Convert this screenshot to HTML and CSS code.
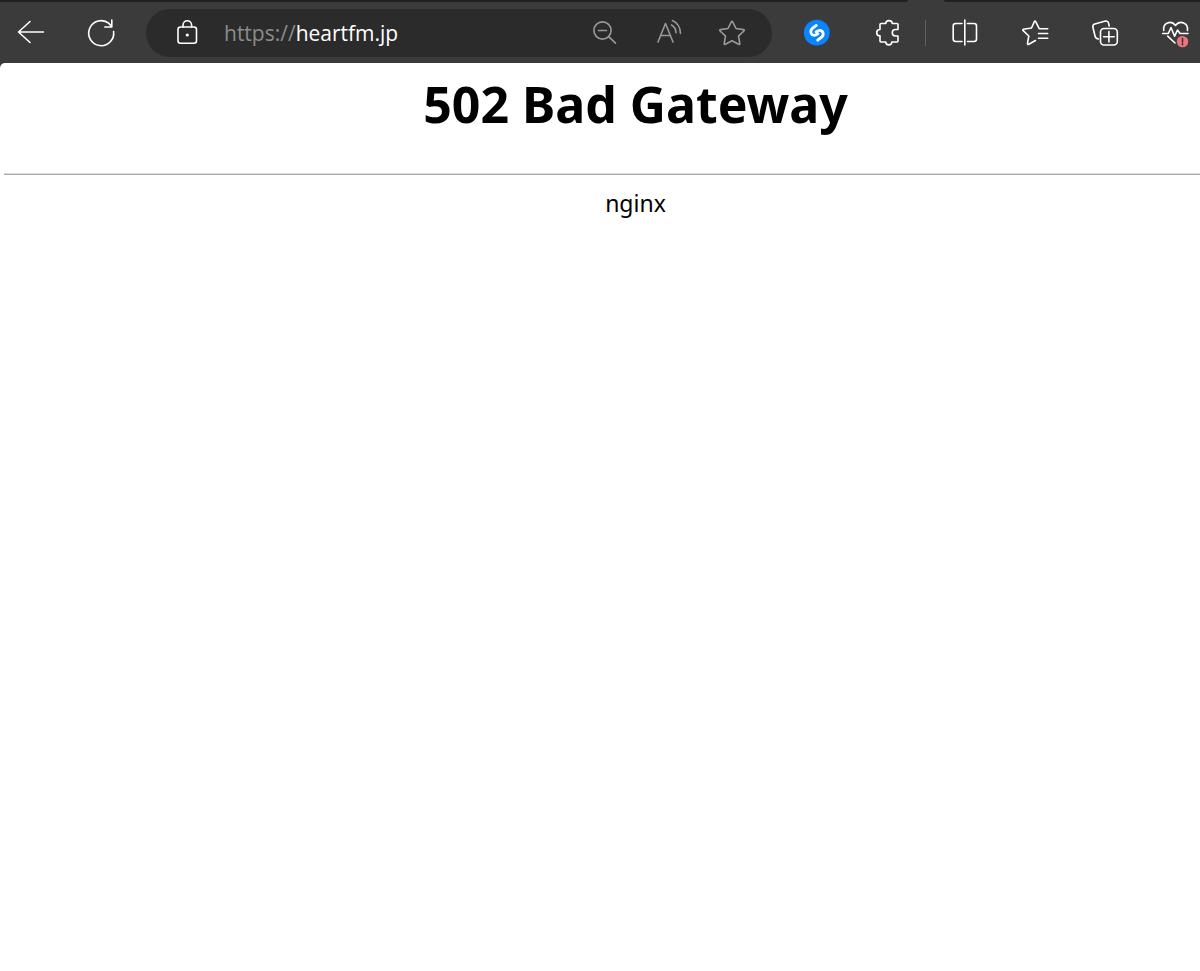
FILE: index.html
```html
<!DOCTYPE html>
<html lang="en">
<head>
<meta charset="utf-8">
<title>502 Bad Gateway</title>
<link rel="stylesheet" href="styles.css">
</head>
<body>
<header class="browser">
  <div class="tabs"><span class="tab-left"></span><span class="tab-right"></span></div>
  <nav class="toolbar" aria-label="Browser toolbar">
    <div class="group">
      <button class="icon" aria-label="Back"><svg viewBox="0 0 32 32"><path d="M28.500 15H3.500M15 4.500L3.500 15l11.500 10.500"/></svg></button>
      <button class="icon" aria-label="Refresh"><svg viewBox="0 0 32 32"><path d="M28.600 14.500A12.500 12.500 0 1 1 24 6.400L26.500 9.500M26.800 3v7h-7"/></svg></button>
    </div>
    <div class="address">
      <button class="icon" aria-label="Site information"><svg viewBox="0 0 32 32"><rect x="7" y="10" width="18.500" height="16.300" rx="2.500"/><path d="M12 10V8a4.300 4.300 0 0 1 8.600 0v2"/><circle class="dot" cx="16.300" cy="18" r="1.600"/></svg></button>
      <div class="url"><span class="scheme">https://</span>heartfm.jp</div>
      <div class="actions">
        <button class="icon" aria-label="Zoom out"><svg viewBox="0 0 32 32"><circle cx="14.500" cy="13.500" r="8.600"/><path d="M10.500 13.500h8M20.700 19.700l6.800 6.500"/></svg></button>
        <button class="icon" aria-label="Read aloud"><svg viewBox="0 0 32 32"><path d="M6 25L13.500 6.500L21 25M8.500 18.500h10M20.500 3.500C25 5.500 28.500 10.500 28.500 16.500M19.500 8C22 9.500 24 12.500 24 15.800"/></svg></button>
        <button class="icon" aria-label="Add to favorites"><svg viewBox="0 0 32 32"><path d="M15.300 4.900Q16 3.500 16.700 4.900L20 11.500L27.500 12.600Q29 12.900 27.900 14L22.500 19.200L23.800 26.500Q24 28 22.600 27.300L16 23.800L9.400 27.300Q8 28 8.200 26.500L9.500 19.200L4.100 14Q3 12.900 4.500 12.600L12 11.500Z"/></svg></button>
      </div>
    </div>
    <div class="group extensions">
      <button class="icon" aria-label="Shazam"><svg viewBox="0 0 32 32"><circle class="blue" cx="15.800" cy="15.700" r="12.900"/><path class="hook" d="M15.300 8.400L11.400 11.400C8.600 13.800 9.800 18.300 13.200 18.300C14.600 18.300 15.800 17.600 17 16.700"/><path class="hook" d="M16.700 23.200L20.600 20.200C23.400 17.800 22.200 13.300 18.800 13.300C17.400 13.300 16.200 14 15 14.900"/></svg></button>
      <button class="icon" aria-label="Extensions"><svg viewBox="0 0 32 32"><path d="M9 7.500Q9 6.500 10 6.500H14.800C14.800 2.600 21.200 2.600 21.200 6.500H26Q27 6.500 27 7.500V12.500H24.500C20.200 12.500 20.200 19 24.500 19H27V24Q27 25 26 25H20.800C20.800 28.800 14.800 28.800 14.800 25H10Q9 25 9 24V18.900C4.600 18.900 4.600 12.500 9 12.500Z"/></svg></button>
    </div>
    <span class="separator"></span>
    <div class="group">
      <button class="icon" aria-label="Split screen"><svg viewBox="0 0 32 32"><path d="M13 6.500H6.700Q4.200 6.500 4.200 9V22Q4.200 24.500 6.700 24.500H13M18.500 6.500H25Q27.500 6.500 27.500 9V22Q27.500 24.500 25 24.500H18.500M15.800 3V28"/></svg></button>
      <button class="icon" aria-label="Favorites"><svg viewBox="0 0 32 32"><path d="M28.700 11.700H20.200L16.700 4.700Q16 3.500 15.300 4.700L12.500 11L4.500 12.300Q3.200 12.800 4.200 13.700L9.800 19L8.500 26.300Q8.400 27.900 9.800 27.200L16.500 23.500M19.500 16.500H28.700M19.500 21.300H28.700"/></svg></button>
      <button class="icon" aria-label="Collections"><svg viewBox="0 0 32 32"><rect x="11.500" y="11.500" width="16.800" height="16.500" rx="3.500"/><path d="M19.900 14.500V25M14.600 19.800H25.200M9.500 22C7.500 21.800 6.500 21 6.100 19.300L3.900 10.300Q3.400 7.800 5.800 7.100L16.500 4.100Q18.900 3.600 19.500 6L20.200 9"/></svg></button>
      <button class="icon" aria-label="Browser essentials"><svg viewBox="0 0 32 32"><path d="M4.800 13.500C3.500 6 12 2.500 16.500 8.500C21 2.500 29.600 6 28.400 13.500M3.700 16.500H9.300L12 10.500L15.600 19.200L18.500 13L21 16.500H29M8.700 19.200L16 26"/><circle class="alert" cx="23.500" cy="24.600" r="5.700"/><path class="mark" d="M23.500 21.500v3.600M23.500 26.800v1"/></svg></button>
    </div>
  </nav>
</header>
<main class="viewport">
  <div class="page">
    <h1>502 Bad Gateway</h1>
    <hr>
    <p>nginx</p>
  </div>
</main>
</body>
</html>
```

FILE: styles.css
```css
* { box-sizing: border-box; }
body {
  margin: 0;
  min-height: 100vh;
  display: flex;
  flex-direction: column;
  background: #fff;
  overflow-x: hidden;
}
.browser { background: #3b3b3b; }
.tabs {
  display: flex;
  justify-content: space-between;
  gap: 36px;
  height: 3px;
}
.tabs span { background: #202020; height: 2px; }
.tab-left { flex: 1; border-bottom-right-radius: 6px; }
.tab-right { width: 256px; border-bottom-left-radius: 6px; }
.toolbar {
  display: flex;
  align-items: center;
  height: 60px;
  padding: 0 9px 0 15px;
}
.group { display: flex; gap: 38px; }
.icon {
  width: 32px;
  height: 32px;
  padding: 0;
  border: 0;
  background: none;
  color: #fff;
  flex: none;
}
.icon svg {
  display: block;
  width: 32px;
  height: 32px;
  fill: none;
  stroke: currentColor;
  stroke-width: 1.6;
  stroke-linecap: round;
  stroke-linejoin: round;
}
.address {
  flex: 1;
  display: flex;
  align-items: center;
  height: 48px;
  margin: 0 29px;
  padding: 0 24px 0 25px;
  border-radius: 24px;
  background: #2b2b2b;
}
.url {
  flex: 1;
  margin-left: 21px;
  font: 21px/32px "Open Sans", sans-serif;
  color: #fff;
}
.scheme { color: #8c8c8c; }
.actions { display: flex; gap: 32px; }
.actions .icon { color: #999; }
.icon .dot { fill: #fff; stroke: none; }
.icon .blue { fill: #0a84ff; stroke: none; }
.icon .hook { stroke-width: 2.8; }
.icon .alert { fill: #e8777d; stroke: none; }
.icon .mark { stroke: #4a2b2d; }
.separator {
  width: 1px;
  height: 26px;
  margin: 0 22px;
  margin-right: 23px;
  background: #606060;
}
.viewport {
  flex: 1;
  padding-left: 4px;
  overflow: hidden;
  background: #fff;
  border-top-left-radius: 5px;
  box-shadow: 0 -5px 0 #3b3b3b;
}
.page {
  margin-right: -67px;
  font-family: "Noto Sans", sans-serif;
  color: #000;
  text-align: center;
}
h1 { margin: 6px 0 34px; font-size: 50px; line-height: 70px; }
hr {
  margin: 0;
  border: 0;
  border-top: 1px solid #ddd;
  border-bottom: 1px solid #aaa;
}
p { margin: 10px 0; font-size: 23px; line-height: 36px; }
```
